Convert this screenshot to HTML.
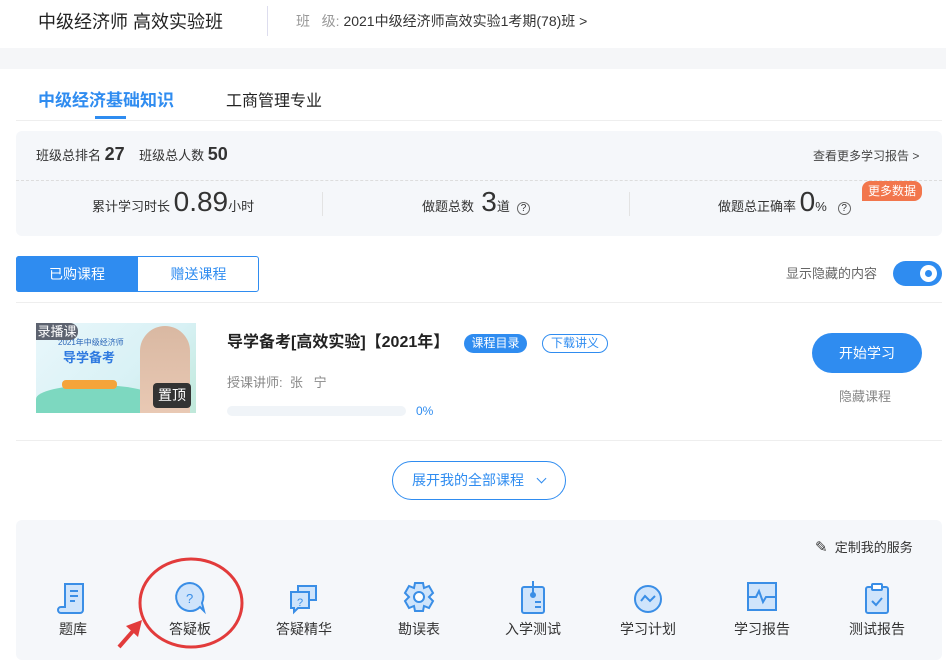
<!DOCTYPE html>
<html><head><meta charset="utf-8"><style>
*{margin:0;padding:0;box-sizing:border-box}
body{width:946px;height:653px;overflow:hidden;background:#fff;font-family:"Liberation Sans","Noto Sans CJK SC",sans-serif;color:#333;position:relative}
.a{position:absolute;white-space:nowrap}
.ic{position:absolute;top:578px;width:40px;height:40px}
.lb{position:absolute;top:619px;font-size:14px;color:#333;width:100px;text-align:center}
</style></head><body>
<div class="a" style="left:38px;top:8px;font-size:18px;color:#222">中级经济师 高效实验班</div>
<div class="a" style="left:267px;top:6px;width:1px;height:30px;background:#dde"></div>
<div class="a" style="left:296px;top:11px;font-size:14px;color:#333"><span style="color:#999">班&nbsp;&nbsp;&nbsp;级:</span> 2021中级经济师高效实验1考期(78)班 &gt;</div>
<div class="a" style="left:0;top:48px;width:946px;height:21px;background:#f5f6f8"></div>
<div class="a" style="left:38px;top:86px;font-size:17px;font-weight:bold;color:#2f8cf0">中级经济基础知识</div>
<div class="a" style="left:226px;top:87px;font-size:16px;color:#222">工商管理专业</div>
<div class="a" style="left:95px;top:116px;width:31px;height:3px;background:#2f8cf0"></div>
<div class="a" style="left:16px;top:120px;width:926px;height:1px;background:#eee"></div>
<div class="a" style="left:16px;top:131px;width:926px;height:105px;background:#f5f7fa;border-radius:6px"></div>
<div class="a" style="left:16px;top:180px;width:926px;border-top:1px dashed #ddd"></div>
<div class="a" style="left:36px;top:144px;font-size:13px;color:#333">班级总排名 <b style="font-size:18px">27</b>&nbsp;&nbsp;&nbsp;&nbsp;班级总人数 <b style="font-size:18px">50</b></div>
<div class="a" style="left:813px;top:147px;font-size:12px;color:#444">查看更多学习报告 &gt;</div>
<div class="a" style="left:862px;top:181px;width:60px;height:20px;background:#f2764c;color:#fff;font-size:12px;border-radius:8px 8px 8px 0;text-align:center;line-height:20px">更多数据</div>
<div class="a" style="left:322px;top:192px;width:1px;height:24px;background:#e3e3e3"></div>
<div class="a" style="left:629px;top:192px;width:1px;height:24px;background:#e3e3e3"></div>
<div class="a" style="left:92px;top:186px;font-size:13px">累计学习时长 <span style="font-size:28px">0.89</span>小时</div>
<div class="a" style="left:422px;top:186px;font-size:13px">做题总数 &nbsp;<span style="font-size:28px">3</span>道 &nbsp;<span style="display:inline-block;width:13px;height:13px;border:1px solid #666;border-radius:50%;font-size:10px;text-align:center;line-height:12px">?</span></div>
<div class="a" style="left:718px;top:186px;font-size:13px">做题总正确率 <span style="font-size:28px">0</span>% &nbsp;&nbsp;<span style="display:inline-block;width:13px;height:13px;border:1px solid #666;border-radius:50%;font-size:10px;text-align:center;line-height:12px">?</span></div>
<div class="a" style="left:16px;top:256px;width:243px;height:36px;border:1px solid #2f8cf0;border-radius:3px"></div>
<div class="a" style="left:16px;top:256px;width:122px;height:36px;background:#2f8cf0;color:#fff;font-size:14px;text-align:center;line-height:36px;border-radius:3px 0 0 3px">已购课程</div>
<div class="a" style="left:138px;top:256px;width:121px;height:36px;color:#2f8cf0;font-size:14px;text-align:center;line-height:36px">赠送课程</div>
<div class="a" style="left:786px;top:263px;font-size:13px;color:#666">显示隐藏的内容</div>
<div class="a" style="left:893px;top:261px;width:49px;height:25px;background:#2f8cf0;border-radius:13px"></div>
<div class="a" style="left:920px;top:265px;width:17px;height:17px;background:#fff;border-radius:50%"></div>
<div class="a" style="left:925px;top:270px;width:7px;height:7px;background:#2f8cf0;border-radius:50%"></div>
<div class="a" style="left:16px;top:302px;width:926px;height:1px;background:#eee"></div>
<div class="a" style="left:36px;top:323px;width:160px;height:90px;background:linear-gradient(135deg,#e9f7fb,#d8f1f5 60%,#bfe8d9)"></div>
<div class="a" style="left:36px;top:385px;width:120px;height:28px;background:#7dd8c0;border-radius:50% 50% 0 0"></div>
<div class="a" style="left:140px;top:326px;width:50px;height:87px;background:linear-gradient(#d9b8a2,#e9c9b4);border-radius:25px 25px 0 0"></div>
<div class="a" style="left:58px;top:337px;font-size:8px;color:#2a66b8">2021年中级经济师</div>
<div class="a" style="left:63px;top:347px;font-size:13px;font-weight:bold;color:#2f7ae0">导学备考</div>
<div class="a" style="left:62px;top:380px;width:55px;height:9px;background:#f5a43a;border-radius:4px"></div>
<div class="a" style="left:36px;top:323px;width:42px;height:17px;background:#5d6370;color:#fff;font-size:13px;line-height:17px;text-align:center;border-radius:0 8px 8px 0">录播课</div>
<div class="a" style="left:153px;top:383px;width:38px;height:25px;background:#333;color:#fff;font-size:14px;line-height:25px;text-align:center;border-radius:4px">置顶</div>
<div class="a" style="left:227px;top:328px;font-size:16px;font-weight:bold;color:#222">导学备考[高效实验]【2021年】</div>
<div class="a" style="left:464px;top:334px;width:63px;height:19px;background:#2f8cf0;color:#fff;font-size:12px;line-height:19px;text-align:center;border-radius:10px">课程目录</div>
<div class="a" style="left:542px;top:334px;width:66px;height:19px;border:1px solid #2f8cf0;color:#2f8cf0;font-size:12px;line-height:17px;text-align:center;border-radius:10px">下载讲义</div>
<div class="a" style="left:227px;top:372px;font-size:13px;color:#888">授课讲师:&nbsp; 张&nbsp;&nbsp;&nbsp;宁</div>
<div class="a" style="left:227px;top:406px;width:179px;height:10px;background:#f0f4f8;border-radius:5px"></div>
<div class="a" style="left:416px;top:404px;font-size:12px;color:#2f8cf0">0%</div>
<div class="a" style="left:812px;top:333px;width:110px;height:40px;background:#2f8cf0;color:#fff;font-size:14px;line-height:40px;text-align:center;border-radius:20px">开始学习</div>
<div class="a" style="left:839px;top:386px;font-size:13px;color:#888">隐藏课程</div>
<div class="a" style="left:16px;top:440px;width:926px;height:1px;background:#eee"></div>
<div class="a" style="left:392px;top:461px;width:174px;height:39px;border:1px solid #2f8cf0;border-radius:20px;color:#2f8cf0;font-size:14px;line-height:37px;padding-left:19px">展开我的全部课程 <span style="margin-left:10px;display:inline-block;width:7px;height:7px;border-right:1.5px solid #2f8cf0;border-bottom:1.5px solid #2f8cf0;transform:translateY(-3px) rotate(45deg)"></span></div>
<div class="a" style="left:16px;top:520px;width:926px;height:140px;background:#f5f7fa;border-radius:6px"></div>
<div class="a" style="left:815px;top:537px;font-size:13px;color:#333"><span style="font-size:15px">✎</span>&nbsp; 定制我的服务</div>
<svg class="ic" style="left:53px" viewBox="0 0 40 40" fill="#cfe4fb" stroke="#3a8ee6" stroke-width="2"><path d="M12 6h18v26a3 3 0 0 1-3 3H8a3 3 0 0 1 0-6h4z"/><path d="M17 13h8M17 18h8M17 23h5" fill="none"/></svg>
<svg class="ic" style="left:170px" viewBox="0 0 40 40" fill="#cfe4fb" stroke="#3a8ee6" stroke-width="2"><path d="M20 5a14 14 0 1 0 10 24l4 4-2-8A14 14 0 0 0 20 5z"/><text x="16" y="25" font-size="13" fill="#3a8ee6" stroke="none">?</text></svg>
<svg class="ic" style="left:284px" viewBox="0 0 40 40" fill="#cfe4fb" stroke="#3a8ee6" stroke-width="2"><rect x="14" y="8" width="18" height="14"/><path d="M7 14h18v16H14l-4 4v-4H7z"/><text x="13" y="28" font-size="11" fill="#3a8ee6" stroke="none">?</text></svg>
<svg class="ic" style="left:399px" viewBox="0 0 40 40" fill="#cfe4fb" stroke="#3a8ee6" stroke-width="2"><path d="M16 5h8l1 5 5-2 4 7-4 4 4 4-4 7-5-2-1 5h-8l-1-5-5 2-4-7 4-4-4-4 4-7 5 2z"/><circle cx="20" cy="19" r="5" fill="#fff"/></svg>
<svg class="ic" style="left:513px" viewBox="0 0 40 40" fill="#cfe4fb" stroke="#3a8ee6" stroke-width="2"><rect x="9" y="9" width="22" height="26" rx="2"/><path d="M20 3v13M22 24h6M22 29h6" fill="none"/><circle cx="20" cy="17" r="2" fill="#3a8ee6"/></svg>
<svg class="ic" style="left:628px" viewBox="0 0 40 40" fill="#cfe4fb" stroke="#3a8ee6" stroke-width="2"><circle cx="20" cy="21" r="13"/><path d="M13 23l4-5 5 5 5-5" fill="none"/></svg>
<svg class="ic" style="left:742px" viewBox="0 0 40 40" fill="#cfe4fb" stroke="#3a8ee6" stroke-width="2"><rect x="6" y="5" width="28" height="27"/><path d="M6 19h8l3-6 4 11 3-5h10" fill="none"/></svg>
<svg class="ic" style="left:857px" viewBox="0 0 40 40" fill="#cfe4fb" stroke="#3a8ee6" stroke-width="2"><rect x="9" y="9" width="22" height="26" rx="2"/><rect x="15" y="6" width="10" height="6" rx="1" fill="#fff"/><path d="M15 23l4 4 6-7" fill="none"/></svg>
<div class="lb" style="left:23px">题库</div>
<div class="lb" style="left:140px">答疑板</div>
<div class="lb" style="left:254px">答疑精华</div>
<div class="lb" style="left:369px">勘误表</div>
<div class="lb" style="left:483px">入学测试</div>
<div class="lb" style="left:598px">学习计划</div>
<div class="lb" style="left:712px">学习报告</div>
<div class="lb" style="left:827px">测试报告</div>
<svg class="a" style="left:0;top:0" width="946" height="653"><ellipse cx="191" cy="603" rx="51" ry="44" fill="none" stroke="#e23b3b" stroke-width="3"/><path d="M119 647L133 631" stroke="#e23b3b" stroke-width="4"/><path d="M126 626L142 620L138 637z" fill="#e23b3b"/></svg>
</body></html>
